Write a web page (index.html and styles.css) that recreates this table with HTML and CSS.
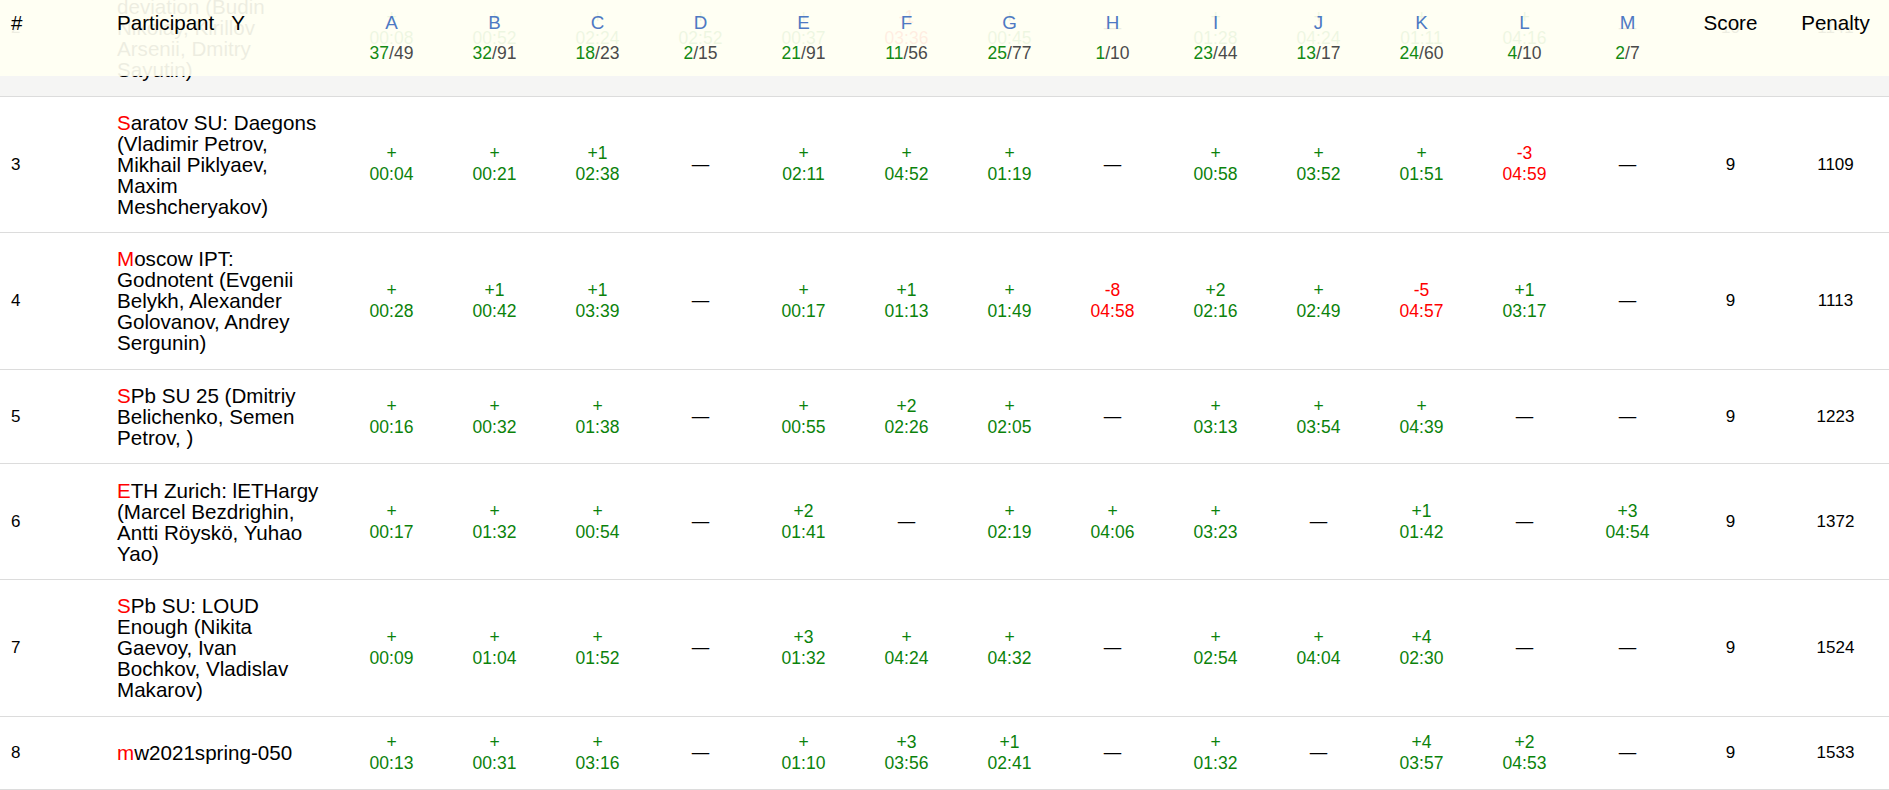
FILE: index.html
```html
<!DOCTYPE html>
<html lang="en">
<head>
<meta charset="utf-8">
<title>Standings</title>
<link rel="stylesheet" href="styles.css">
</head>
<body>
<div class="standings">
  <div class="cols head">
    <div class="h-rank">#</div>
    <div class="h-name">Participant<span class="filter">Y</span></div>
    <div class="h-prob"><div class="letter">A</div><div class="frac"><span class="ok">37</span>/49</div></div>
    <div class="h-prob"><div class="letter">B</div><div class="frac"><span class="ok">32</span>/91</div></div>
    <div class="h-prob"><div class="letter">C</div><div class="frac"><span class="ok">18</span>/23</div></div>
    <div class="h-prob"><div class="letter">D</div><div class="frac"><span class="ok">2</span>/15</div></div>
    <div class="h-prob"><div class="letter">E</div><div class="frac"><span class="ok">21</span>/91</div></div>
    <div class="h-prob"><div class="letter">F</div><div class="frac"><span class="ok">11</span>/56</div></div>
    <div class="h-prob"><div class="letter">G</div><div class="frac"><span class="ok">25</span>/77</div></div>
    <div class="h-prob"><div class="letter">H</div><div class="frac"><span class="ok">1</span>/10</div></div>
    <div class="h-prob"><div class="letter">I</div><div class="frac"><span class="ok">23</span>/44</div></div>
    <div class="h-prob"><div class="letter">J</div><div class="frac"><span class="ok">13</span>/17</div></div>
    <div class="h-prob"><div class="letter">K</div><div class="frac"><span class="ok">24</span>/60</div></div>
    <div class="h-prob"><div class="letter">L</div><div class="frac"><span class="ok">4</span>/10</div></div>
    <div class="h-prob"><div class="letter">M</div><div class="frac"><span class="ok">2</span>/7</div></div>
    <div class="h-score">Score</div>
    <div class="h-pen">Penalty</div>
  </div>

  <div class="body">
    <div class="cols row row-hl">
      <div class="rank">2</div>
      <div class="name"><span class="first">M</span>IPT: Standard deviation (Budin Nikolay, Kirillov Arsenii, Dmitry Sayutin)</div>
      <div class="prob"><div>+</div><div>00:08</div></div>
      <div class="prob"><div>+</div><div>00:52</div></div>
      <div class="prob"><div>+</div><div>02:24</div></div>
      <div class="prob"><div>+</div><div>02:52</div></div>
      <div class="prob"><div>+</div><div>00:37</div></div>
      <div class="prob fail"><div>-1</div><div>03:36</div></div>
      <div class="prob"><div>+</div><div>00:45</div></div>
      <div class="prob dash">—</div>
      <div class="prob"><div>+</div><div>01:28</div></div>
      <div class="prob"><div>+</div><div>04:24</div></div>
      <div class="prob"><div>+</div><div>01:11</div></div>
      <div class="prob"><div>+</div><div>04:16</div></div>
      <div class="prob dash">—</div>
      <div class="score">10</div>
      <div class="pen">1141</div>
    </div>

    <div class="cols row">
      <div class="rank">3</div>
      <div class="name"><span class="first">S</span>aratov SU: Daegons (Vladimir Petrov, Mikhail Piklyaev, Maxim Meshcheryakov)</div>
      <div class="prob"><div>+</div><div>00:04</div></div>
      <div class="prob"><div>+</div><div>00:21</div></div>
      <div class="prob"><div>+1</div><div>02:38</div></div>
      <div class="prob dash">—</div>
      <div class="prob"><div>+</div><div>02:11</div></div>
      <div class="prob"><div>+</div><div>04:52</div></div>
      <div class="prob"><div>+</div><div>01:19</div></div>
      <div class="prob dash">—</div>
      <div class="prob"><div>+</div><div>00:58</div></div>
      <div class="prob"><div>+</div><div>03:52</div></div>
      <div class="prob"><div>+</div><div>01:51</div></div>
      <div class="prob fail"><div>-3</div><div>04:59</div></div>
      <div class="prob dash">—</div>
      <div class="score">9</div>
      <div class="pen">1109</div>
    </div>

    <div class="cols row">
      <div class="rank">4</div>
      <div class="name"><span class="first">M</span>oscow IPT: Godnotent (Evgenii Belykh, Alexander Golovanov, Andrey Sergunin)</div>
      <div class="prob"><div>+</div><div>00:28</div></div>
      <div class="prob"><div>+1</div><div>00:42</div></div>
      <div class="prob"><div>+1</div><div>03:39</div></div>
      <div class="prob dash">—</div>
      <div class="prob"><div>+</div><div>00:17</div></div>
      <div class="prob"><div>+1</div><div>01:13</div></div>
      <div class="prob"><div>+</div><div>01:49</div></div>
      <div class="prob fail"><div>-8</div><div>04:58</div></div>
      <div class="prob"><div>+2</div><div>02:16</div></div>
      <div class="prob"><div>+</div><div>02:49</div></div>
      <div class="prob fail"><div>-5</div><div>04:57</div></div>
      <div class="prob"><div>+1</div><div>03:17</div></div>
      <div class="prob dash">—</div>
      <div class="score">9</div>
      <div class="pen">1113</div>
    </div>

    <div class="cols row">
      <div class="rank">5</div>
      <div class="name"><span class="first">S</span>Pb SU 25 (Dmitriy Belichenko, Semen Petrov, )</div>
      <div class="prob"><div>+</div><div>00:16</div></div>
      <div class="prob"><div>+</div><div>00:32</div></div>
      <div class="prob"><div>+</div><div>01:38</div></div>
      <div class="prob dash">—</div>
      <div class="prob"><div>+</div><div>00:55</div></div>
      <div class="prob"><div>+2</div><div>02:26</div></div>
      <div class="prob"><div>+</div><div>02:05</div></div>
      <div class="prob dash">—</div>
      <div class="prob"><div>+</div><div>03:13</div></div>
      <div class="prob"><div>+</div><div>03:54</div></div>
      <div class="prob"><div>+</div><div>04:39</div></div>
      <div class="prob dash">—</div>
      <div class="prob dash">—</div>
      <div class="score">9</div>
      <div class="pen">1223</div>
    </div>

    <div class="cols row">
      <div class="rank">6</div>
      <div class="name"><span class="first">E</span>TH Zurich: lETHargy (Marcel Bezdrighin, Antti Röyskö, Yuhao Yao)</div>
      <div class="prob"><div>+</div><div>00:17</div></div>
      <div class="prob"><div>+</div><div>01:32</div></div>
      <div class="prob"><div>+</div><div>00:54</div></div>
      <div class="prob dash">—</div>
      <div class="prob"><div>+2</div><div>01:41</div></div>
      <div class="prob dash">—</div>
      <div class="prob"><div>+</div><div>02:19</div></div>
      <div class="prob"><div>+</div><div>04:06</div></div>
      <div class="prob"><div>+</div><div>03:23</div></div>
      <div class="prob dash">—</div>
      <div class="prob"><div>+1</div><div>01:42</div></div>
      <div class="prob dash">—</div>
      <div class="prob"><div>+3</div><div>04:54</div></div>
      <div class="score">9</div>
      <div class="pen">1372</div>
    </div>

    <div class="cols row">
      <div class="rank">7</div>
      <div class="name"><span class="first">S</span>Pb SU: LOUD Enough (Nikita Gaevoy, Ivan Bochkov, Vladislav Makarov)</div>
      <div class="prob"><div>+</div><div>00:09</div></div>
      <div class="prob"><div>+</div><div>01:04</div></div>
      <div class="prob"><div>+</div><div>01:52</div></div>
      <div class="prob dash">—</div>
      <div class="prob"><div>+3</div><div>01:32</div></div>
      <div class="prob"><div>+</div><div>04:24</div></div>
      <div class="prob"><div>+</div><div>04:32</div></div>
      <div class="prob dash">—</div>
      <div class="prob"><div>+</div><div>02:54</div></div>
      <div class="prob"><div>+</div><div>04:04</div></div>
      <div class="prob"><div>+4</div><div>02:30</div></div>
      <div class="prob dash">—</div>
      <div class="prob dash">—</div>
      <div class="score">9</div>
      <div class="pen">1524</div>
    </div>

    <div class="cols row">
      <div class="rank">8</div>
      <div class="name"><span class="first">m</span>w2021spring-050</div>
      <div class="prob"><div>+</div><div>00:13</div></div>
      <div class="prob"><div>+</div><div>00:31</div></div>
      <div class="prob"><div>+</div><div>03:16</div></div>
      <div class="prob dash">—</div>
      <div class="prob"><div>+</div><div>01:10</div></div>
      <div class="prob"><div>+3</div><div>03:56</div></div>
      <div class="prob"><div>+1</div><div>02:41</div></div>
      <div class="prob dash">—</div>
      <div class="prob"><div>+</div><div>01:32</div></div>
      <div class="prob dash">—</div>
      <div class="prob"><div>+4</div><div>03:57</div></div>
      <div class="prob"><div>+2</div><div>04:53</div></div>
      <div class="prob dash">—</div>
      <div class="score">9</div>
      <div class="pen">1533</div>
    </div>
  </div>
</div>
</body>
</html>
```

FILE: styles.css
```css
* {
  box-sizing: border-box;
}

html,
body {
  margin: 0;
  padding: 0;
  background: #ffffff;
}

body {
  font-family: "Liberation Sans", Arial, sans-serif;
  color: #000000;
}

.standings {
  position: relative;
  height: 790px;
  overflow: hidden;
}

.cols {
  display: grid;
  grid-template-columns: 106px 234px repeat(13, 103px) 103px 1fr;
}

/* sticky-style header lying over the scrolled rows */
.head {
  position: absolute;
  top: 0;
  left: 0;
  right: 0;
  height: 76px;
  z-index: 2;
  align-items: start;
  padding-top: 10px;
  background: rgba(255, 255, 242, 0.93);
}

.h-rank,
.h-name,
.h-score,
.h-pen {
  font-size: 20.6px;
  line-height: 26px;
}

.h-rank {
  padding-left: 11px;
}

.h-name {
  padding-left: 11px;
}

.filter {
  margin-left: 17px;
}

.h-score,
.h-pen {
  text-align: center;
}

.h-prob {
  text-align: center;
  font-size: 17.5px;
}

.letter {
  font-size: 18.8px;
  line-height: 26px;
  color: #4e79c3;
}

.frac {
  line-height: 20px;
  margin-top: 7px;
  color: #4a4a4a;
}

.frac .ok {
  color: #138a13;
}

/* body rows */
.body {
  margin-top: -40px;
}

.row {
  align-items: center;
  border-bottom: 1px solid #dcdcdc;
  background: #ffffff;
}

.row-hl {
  background: #f5f5f4;
}

.row > div {
  padding-top: 15.3px;
  padding-bottom: 15.3px;
}

.rank {
  padding-left: 11px;
  font-size: 17px;
  line-height: 21px;
}

.name {
  padding-left: 11px;
  padding-right: 15px;
  font-size: 20.6px;
  line-height: 21px;
}

.first {
  color: #ff0000;
}

.prob {
  text-align: center;
  font-size: 17.5px;
  line-height: 21px;
  color: #0b820b;
}

.prob.fail {
  color: #ff0000;
}

.prob.dash {
  color: #000000;
}

.score,
.pen {
  text-align: center;
  font-size: 17px;
  line-height: 21px;
}
```
